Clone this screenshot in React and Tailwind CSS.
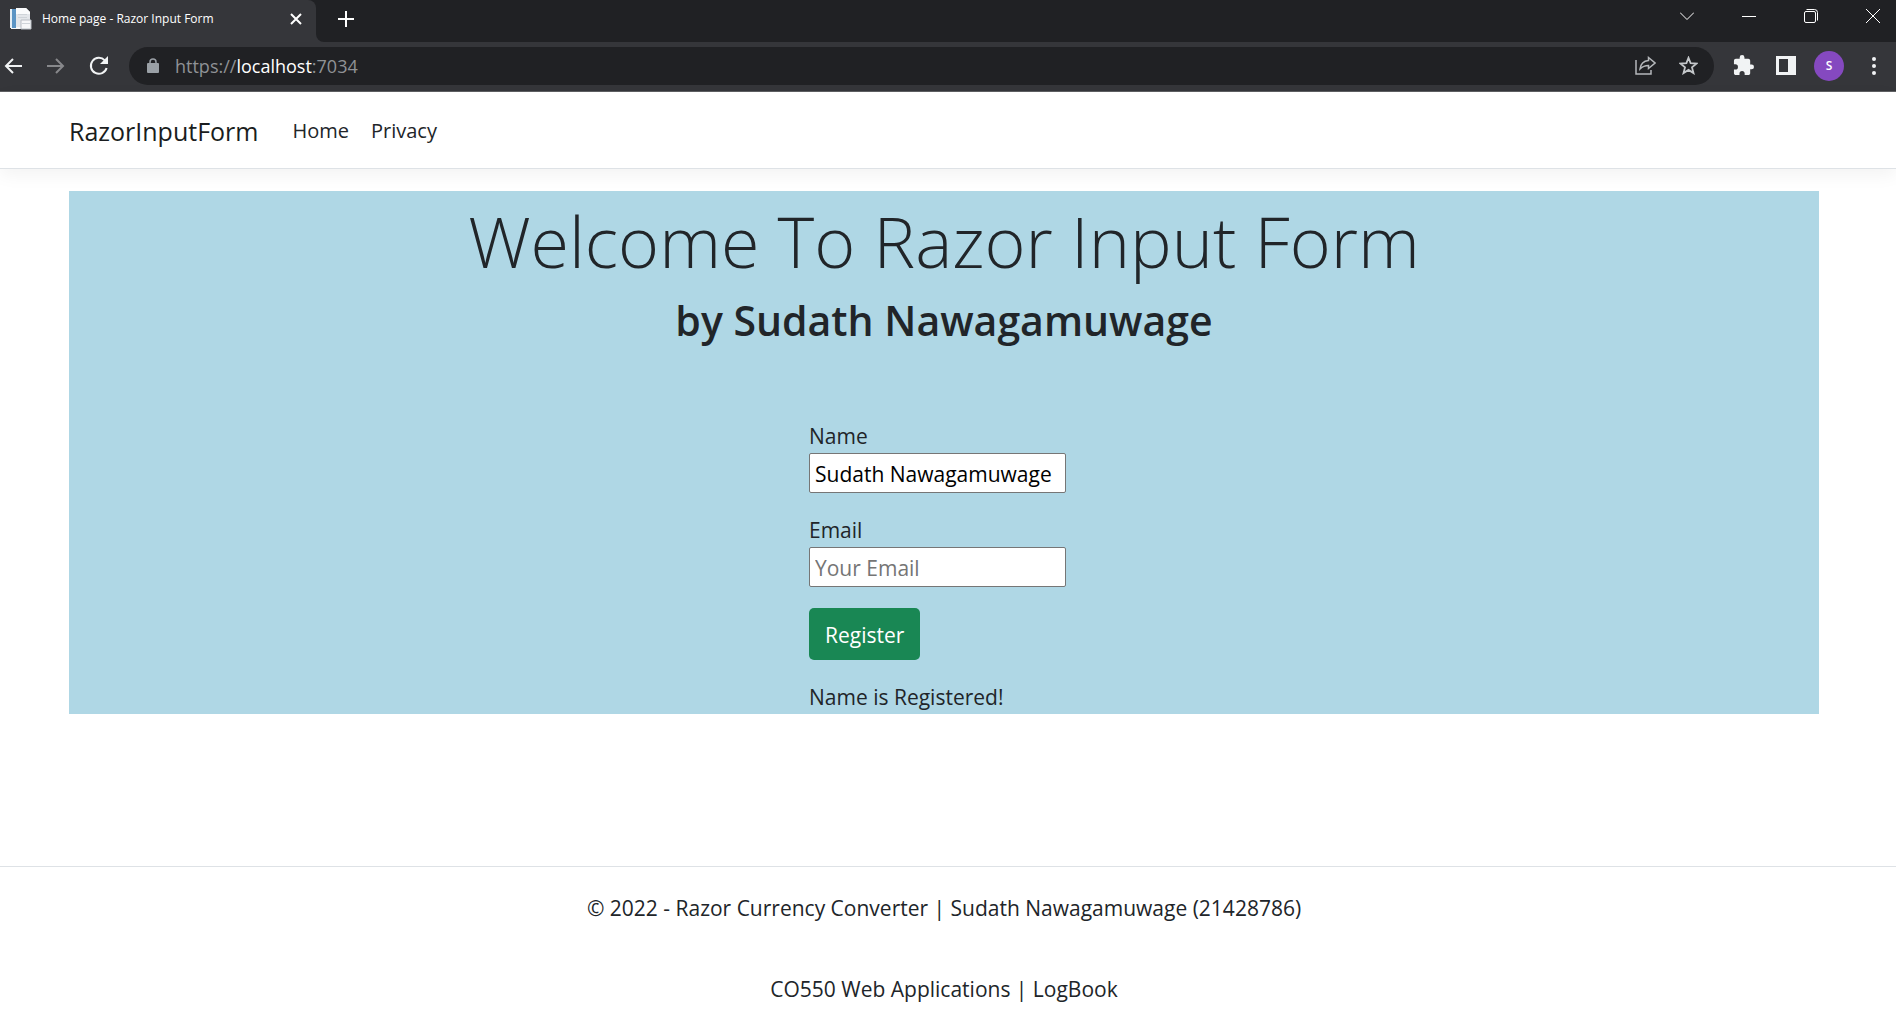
import { useState } from "react";

function IconButton({ label, className = "", children }) {
  return (
    <button type="button" aria-label={label} className={"flex shrink-0 items-center justify-center " + className}>
      {children}
    </button>
  );
}

function TabStrip() {
  return (
    <div className="flex h-[42px] bg-[#202124] text-white">
      <div className="flex h-[42px] w-[316px] items-center rounded-tr-lg bg-[#35363a] pb-1 pl-2.5 pr-2.5">
        <svg width="22" height="22" viewBox="0 0 22 22" aria-hidden="true">
          <path d="M1 1h15v20H1z" fill="#f4f6f8" />
          <path d="M0 1h6v19H0z" fill="#5b94c4" />
          <path d="M0 1h2v19H0z" fill="#e4eef5" />
          <path d="M6 0h10l4 4v15H6z" fill="#e3e6ea" />
          <path d="M6 0h10l4 4v2H6z" fill="#fafbfc" />
          <path d="M11 12h10v9H11z" fill="#f6f7f8" stroke="#b9bec4" />
          <path d="M12 15h8v1h-8zM8 6h9v1H8zM8 9h9v1H8z" fill="#cfd4d9" />
        </svg>
        <span className="ml-2.5 flex-1 text-[12px] leading-4">Home page - Razor Input Form</span>
        <IconButton label="Close tab" className="size-5">
          <svg width="12" height="12" viewBox="0 0 12 12" stroke="currentColor" strokeWidth="2" aria-hidden="true">
            <path d="M1 1l10 10M11 1L1 11" />
          </svg>
        </IconButton>
      </div>
      <div className="size-2 self-end bg-[#35363a]">
        <div className="size-2 rounded-bl-lg bg-[#202124]" />
      </div>
      <IconButton label="New tab" className="mb-1 ml-2 w-7">
        <svg width="16" height="16" viewBox="0 0 16 16" stroke="currentColor" strokeWidth="2" aria-hidden="true">
          <path d="M8 0v16M0 8h16" />
        </svg>
      </IconButton>
      <div className="ml-auto flex h-8">
        <IconButton label="Search tabs" className="w-[62px]">
          <svg width="14" height="8" viewBox="0 0 14 8" fill="none" stroke="currentColor" aria-hidden="true">
            <path d="M0 .5l7 7 7-7" />
          </svg>
        </IconButton>
        <IconButton label="Minimize" className="w-[62px]">
          <svg width="14" height="14" viewBox="0 0 14 14" stroke="currentColor" aria-hidden="true">
            <path d="M0 7.500h14" />
          </svg>
        </IconButton>
        <IconButton label="Restore" className="w-[62px]">
          <svg width="14" height="14" viewBox="0 0 14 14" fill="none" stroke="currentColor" aria-hidden="true">
            <rect x=".5" y="2.500" width="11" height="11" rx="1.500" />
            <path d="M2.500 .5h8a3 3 0 0 1 3 3v8" />
          </svg>
        </IconButton>
        <IconButton label="Close window" className="mr-4 w-[14px] ml-6">
          <svg width="14" height="14" viewBox="0 0 14 14" stroke="currentColor" aria-hidden="true">
            <path d="M0 0l14 14M14 0L0 14" />
          </svg>
        </IconButton>
      </div>
    </div>
  );
}

function Toolbar() {
  return (
    <div className="flex h-[50px] items-center border-b border-[#5f6063] bg-[#35363a] pb-0.5 text-[#f1f3f4]">
      <IconButton label="Back" className="w-[25px]">
        <svg width="18" height="16" viewBox="0 0 18 16" fill="none" stroke="currentColor" strokeWidth="2" aria-hidden="true">
          <path d="M18 8H2M9 1L2 8l7 7" />
        </svg>
      </IconButton>
      <IconButton label="Forward" className="ml-[18px] w-[26px] text-[#87888b]">
        <svg width="18" height="16" viewBox="0 0 18 16" fill="none" stroke="currentColor" strokeWidth="2" aria-hidden="true">
          <path d="M0 8h16M9 1l7 7-7 7" />
        </svg>
      </IconButton>
      <IconButton label="Reload" className="ml-[17px] w-[26px]">
        <svg width="20" height="20" viewBox="0 0 20 20" fill="none" stroke="currentColor" strokeWidth="2" aria-hidden="true">
          <path d="M17.600 12A8 8 0 1 1 15.800 4.400" />
          <path d="M19 0v8h-8z" fill="currentColor" stroke="none" />
        </svg>
      </IconButton>
      <div className="ml-[17px] flex h-[38px] flex-1 items-center rounded-full bg-[#202124] pl-[18px] pr-4">
        <svg width="12" height="16" viewBox="0 0 12 16" aria-hidden="true">
          <rect x="0" y="5" width="12" height="10" rx="1" fill="#9aa0a6" />
          <path d="M3 6V4a3 3 0 0 1 6 0v2" fill="none" stroke="#9aa0a6" strokeWidth="1.500" />
        </svg>
        <a href="#" className="ml-4 flex-1 text-lg leading-6 text-[#8f9296]">
          https://<span className="text-white">localhost</span>:7034
        </a>
        <IconButton label="Share this page" className="text-[#b4b7ba]">
          <svg width="21" height="19" viewBox="0 0 21 19" fill="none" stroke="currentColor" strokeWidth="1.500" aria-hidden="true">
            <path d="M1 4v14h15v-4" />
            <path d="M13.500 1.500L20 7l-6.500 5.500V9.500c-4 0-6 1-8.500 3.500.5-4 3-8 8.500-8.500z" />
          </svg>
        </IconButton>
        <IconButton label="Bookmark this page" className="ml-[23px] text-[#c4c7ca]">
          <svg width="19" height="19" viewBox="0 0 19 19" fill="none" stroke="currentColor" strokeWidth="1.800" aria-hidden="true">
            <path d="M9.500 1.800l2.100 5.400 5.900.4-4.500 3.800 1.500 5.700-5-3.200-5 3.200L6 11.400 1.500 7.600l5.900-.4z" />
          </svg>
        </IconButton>
      </div>
      <IconButton label="Extensions" className="ml-[19px]">
        <svg width="21" height="21" viewBox="1 1 22 22" fill="currentColor" aria-hidden="true">
          <path d="M20.500 11H19V7c0-1.100-.9-2-2-2h-4V3.500a2.500 2.500 0 0 0-5 0V5H4c-1.100 0-2 .9-2 2v3.800h1.500a2.700 2.700 0 0 1 0 5.400H2V20c0 1.100.9 2 2 2h3.800v-1.500a2.700 2.700 0 0 1 5.400 0V22H17c1.100 0 2-.9 2-2v-4h1.500a2.500 2.500 0 0 0 0-5z" />
        </svg>
      </IconButton>
      <IconButton label="Side panel" className="ml-[22px]">
        <svg width="20" height="19" viewBox="0 0 20 19" aria-hidden="true">
          <path d="M0 0h20v19H0z" fill="currentColor" />
          <path d="M3 3h9v13H3z" fill="#35363a" />
        </svg>
      </IconButton>
      <IconButton label="Profile" className="ml-[18px] size-[30px] rounded-full bg-[#8549c0] text-xs font-semibold text-white">
        S
      </IconButton>
      <IconButton label="Menu" className="ml-[18px] mr-2.5 w-6">
        <svg width="4" height="18" viewBox="0 0 4 18" fill="currentColor" aria-hidden="true">
          <circle cx="2" cy="2" r="2" />
          <circle cx="2" cy="9" r="2" />
          <circle cx="2" cy="16" r="2" />
        </svg>
      </IconButton>
    </div>
  );
}

function Field({ id, label, ...props }) {
  return (
    <div className="flex flex-col">
      <label htmlFor={id}>{label}</label>
      <input
        id={id}
        className="h-10 w-[257px] rounded-xs border border-[#767676] bg-white px-[5px] pt-0.5 text-black placeholder:text-[#757575]"
        {...props}
      />
    </div>
  );
}

export default function App() {
  const [name, setName] = useState("Sudath Nawagamuwage");
  const [email, setEmail] = useState("");
  return (
    <div className="min-h-screen bg-white font-['Open_Sans','Noto_Sans',sans-serif] text-[21px] leading-[34px] text-[#212529]">
      <TabStrip />
      <Toolbar />
      <header className="border-b border-[#dee2e6] bg-white shadow-[0_6px_17px_rgba(0,0,0,0.05)]">
        <nav className="flex h-[76px] items-center pl-[69px] pt-px text-[20px]">
          <a href="#" className="text-[25px] text-[#1a1d20]">RazorInputForm</a>
          <a href="#" className="ml-[34px]">Home</a>
          <a href="#" className="ml-[22px]">Privacy</a>
        </nav>
      </header>
      <main className="ml-[69px] mr-[77px] mt-[22px] flex flex-col items-center bg-[#afd7e5]">
        <h1 className="pt-1 text-center text-[70px] font-light leading-[92px]">Welcome To Razor Input Form</h1>
        <h2 className="mt-1.5 text-center text-[41px] font-semibold leading-[54px]">by Sudath Nawagamuwage</h2>
        <form className="mt-[72px] flex w-[270px] flex-col items-start" onSubmit={(e) => e.preventDefault()}>
          <Field id="name" label="Name" type="text" value={name} onChange={(e) => setName(e.target.value)} />
          <div className="mt-5">
            <Field id="email" label="Email" type="email" placeholder="Your Email" value={email} onChange={(e) => setEmail(e.target.value)} />
          </div>
          <button type="submit" className="mt-[21px] h-[52px] rounded-[5px] bg-[#198754] px-4 pt-px text-white">
            Register
          </button>
          <p className="mt-5">Name is Registered!</p>
        </form>
      </main>
      <footer className="mt-[152px] flex flex-col items-center border-t border-[#dee2e6] pr-2 pt-6 text-center">
        <p>© 2022 - Razor Currency Converter | Sudath Nawagamuwage (21428786)</p>
        <p className="mt-[47px]">CO550 Web Applications | LogBook</p>
      </footer>
    </div>
  );
}
